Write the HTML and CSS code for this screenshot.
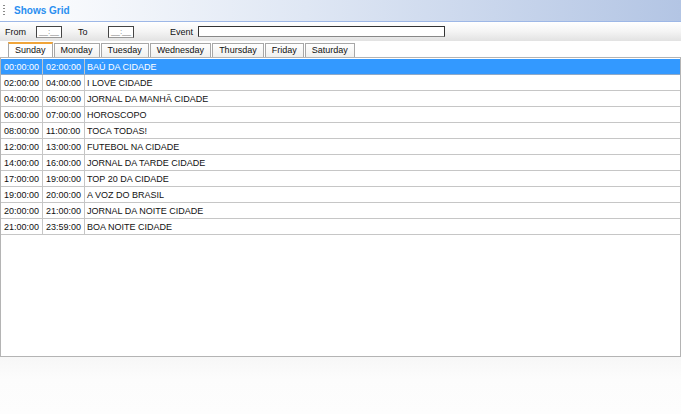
FILE: index.html
```html
<!DOCTYPE html>
<html lang="en">
<head>
    <meta charset="UTF-8">
    <title>Shows Grid</title>
    <link rel="stylesheet" href="styles.css">
</head>
<body>

    <!-- Title Bar -->
    <div class="titlebar">
        <span class="grip"></span>
        <span class="title">Shows Grid</span>
    </div>

    <!-- Filter Row -->
    <div class="filters">
        <span class="lbl lbl-from">From</span>
        <span class="mask">__:__</span>
        <span class="lbl lbl-to">To</span>
        <span class="mask">__:__</span>
        <span class="lbl lbl-event">Event</span>
        <span class="event-box"></span>
    </div>

    <!-- Day Tabs -->
    <div class="tabs">
        <div class="tab active">Sunday</div>
        <div class="tab">Monday</div>
        <div class="tab">Tuesday</div>
        <div class="tab">Wednesday</div>
        <div class="tab">Thursday</div>
        <div class="tab">Friday</div>
        <div class="tab">Saturday</div>
    </div>

    <!-- Grid -->
    <div class="grid">
        <table>
            <tr class="selected"><td class="c1">00:00:00</td><td class="c2">02:00:00</td><td class="c3">BAÚ DA CIDADE</td></tr>
            <tr><td class="c1">02:00:00</td><td class="c2">04:00:00</td><td class="c3">I LOVE CIDADE</td></tr>
            <tr><td class="c1">04:00:00</td><td class="c2">06:00:00</td><td class="c3">JORNAL DA MANHÃ CIDADE</td></tr>
            <tr><td class="c1">06:00:00</td><td class="c2">07:00:00</td><td class="c3">HOROSCOPO</td></tr>
            <tr><td class="c1">08:00:00</td><td class="c2">11:00:00</td><td class="c3">TOCA TODAS!</td></tr>
            <tr><td class="c1">12:00:00</td><td class="c2">13:00:00</td><td class="c3">FUTEBOL NA CIDADE</td></tr>
            <tr><td class="c1">14:00:00</td><td class="c2">16:00:00</td><td class="c3">JORNAL DA TARDE CIDADE</td></tr>
            <tr><td class="c1">17:00:00</td><td class="c2">19:00:00</td><td class="c3">TOP 20 DA CIDADE</td></tr>
            <tr><td class="c1">19:00:00</td><td class="c2">20:00:00</td><td class="c3">A VOZ DO BRASIL</td></tr>
            <tr><td class="c1">20:00:00</td><td class="c2">21:00:00</td><td class="c3">JORNAL DA NOITE CIDADE</td></tr>
            <tr><td class="c1">21:00:00</td><td class="c2">23:59:00</td><td class="c3">BOA NOITE CIDADE</td></tr>
        </table>
    </div>

    <!-- Bottom Panel -->
    <div class="footer"></div>

</body>
</html>
```

FILE: styles.css
```css
body {
    margin: 0;
    width: 681px;
    height: 414px;
    overflow: hidden;
    font-family: 'Liberation Sans', Arial, sans-serif;
    font-size: 9px;
    color: #111;
    background: #fcfcfc;
}
/* Title Bar */
.titlebar {
    height: 21px;
    display: flex;
    align-items: center;
    background: linear-gradient(to right, #ffffff 0%, #dfe7f4 45%, #b3c5e4 100%);
    border-bottom: 1px solid #9db7e6;
}
.grip {
    width: 2px;
    height: 13px;
    margin-left: 3px;
    margin-right: 9px;
    background: radial-gradient(circle, #8a8a8a 0.8px, transparent 1px) 0 0 / 2px 3px;
}
.title {
    font-size: 10px;
    font-weight: bold;
    color: #2a8ff0;
}
/* Filter Row */
.filters {
    height: 19px;
    display: flex;
    align-items: center;
    padding-left: 5px;
    background: linear-gradient(to bottom, #ffffff 0%, #f4f4f4 50%, #e2e2e2 100%);
}
.lbl {
    flex: none;
}
.lbl-from {
    width: 31px;
}
.lbl-to {
    margin-left: 16px;
    width: 30px;
}
.lbl-event {
    margin-left: 36px;
    width: 28px;
}
.mask {
    flex: none;
    box-sizing: border-box;
    width: 26px;
    height: 12px;
    line-height: 10px;
    text-align: center;
    font-size: 8px;
    color: #777;
    background: #fff;
    border: 1px solid #444;
    border-bottom-color: #999;
}
.event-box {
    flex: none;
    box-sizing: border-box;
    width: 247px;
    height: 11px;
    background: #fff;
    border: 1px solid #333;
    border-bottom-color: #888;
}
/* Day Tabs */
.tabs {
    height: 16px;
    display: flex;
    align-items: flex-end;
    padding-left: 8px;
    background: #fff;
}
.tab {
    height: 13px;
    line-height: 13px;
    padding: 0 6px;
    margin-right: 1px;
    border: 1px solid #a7a7a7;
    border-bottom: none;
    background: linear-gradient(to bottom, #ffffff 0%, #f0f0ee 100%);
}
.tab.active {
    border-top: 2px solid #f0a53a;
    background: #fff;
}
/* Grid */
.grid {
    height: 297px;
    border: 1px solid #b4b4b4;
    background: #fff;
    padding-top: 1px;
}
table {
    width: 100%;
    border-collapse: collapse;
}
td {
    height: 15px;
    padding: 0 0 0 3px;
    border-bottom: 1px solid #c6c6c6;
    border-right: 1px solid #c6c6c6;
    white-space: nowrap;
}
td.c1,
td.c2 {
    width: 38px;
}
td.c3 {
    padding-left: 2px;
    border-right: none;
}
tr.selected td {
    background: #3399ff;
    color: #fff;
    border-bottom-color: #8ea9c8;
}
/* Bottom Panel */
.footer {
    height: 57px;
    background: linear-gradient(to bottom, #f7f7f7 0%, #fcfcfc 40%, #fdfdfd 100%);
}
```
